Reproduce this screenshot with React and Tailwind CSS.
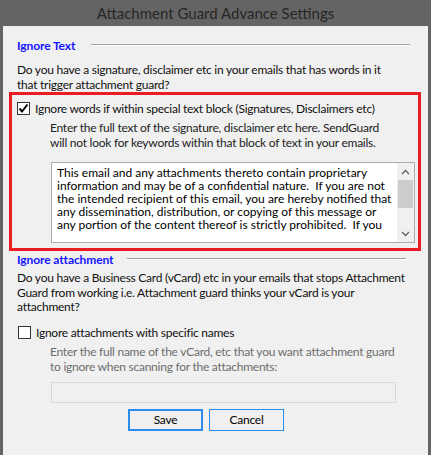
import React from 'react';

const Check = () => (
  <svg width="11" height="11" viewBox="0 0 11 11">
    <path d="M1.5 5.5 L4 8.5 L9.5 1.5" fill="none" stroke="#000" strokeWidth="2" />
  </svg>
);

const Checkbox = ({ checked }) => (
  <div className="flex h-[13px] w-[13px] shrink-0 items-center justify-center border border-[#333] bg-white">
    {checked && <Check />}
  </div>
);

const SectionHeader = ({ title, lineClass }) => (
  <div className="flex h-[16px] items-center pl-[14px]">
    <span className="text-[12px] font-bold tracking-[-0.1px] text-[#1414ff]">{title}</span>
    <div className={lineClass}>
      <div className="h-px bg-[#a0a0a0]" />
      <div className="h-px bg-white" />
    </div>
  </div>
);

const Chevron = ({ up }) => (
  <svg width="9" height="6" viewBox="0 0 9 6">
    <path
      d={up ? 'M1 5 L4.5 1.5 L8 5' : 'M1 1 L4.5 4.5 L8 1'}
      fill="none"
      stroke="#606060"
      strokeWidth="1.3"
    />
  </svg>
);

const App = () => {
  return (
    <div
      className="flex h-[455px] w-[431px] flex-col overflow-hidden whitespace-nowrap bg-[#646464]"
      style={{ fontFamily: 'Lato, "Noto Sans", sans-serif' }}
    >
      {/* title bar */}
      <div className="flex h-[26px] items-center justify-center text-[15px] text-[#262626]">
        Attachment Guard Advance Settings
      </div>

      <div className="mx-[3px] flex-1 bg-[#f0f0f0] pt-[11px] text-[12px] leading-[15px] tracking-[-0.25px] text-[#111]">
        <SectionHeader title="Ignore Text" lineClass="ml-[16px] mr-[18px] flex-1" />

        <p className="ml-[14px] mt-[9px]">
          Do you have a signature, disclaimer etc in your emails that has words in it
          <br />
          that trigger attachment guard?
        </p>

        {/* highlighted block */}
        <div className="ml-[6px] mr-[7px] border-[3px] border-[#ec1c24] pb-[5px] pr-[3px]">
          <div className="flex items-center gap-[5px] pl-[5px] pt-[6px]">
            <Checkbox checked />
            <span>Ignore words if within special text block (Signatures, Disclaimers etc)</span>
          </div>
          <p className="ml-[38px] mt-[4px] text-[#222]">
            Enter the full text of the signature, disclaimer etc here. SendGuard
            <br />
            will not look for keywords within that block of text in your emails.
          </p>
          <div className="ml-[39px] mt-[12px] flex h-[81px] border border-[#abadb3] bg-white">
            <div className="flex-1 overflow-hidden pl-[5px] pt-[3px] text-[12px] leading-[13px] tracking-[0px] text-black">
              This email and any attachments thereto contain proprietary
              <br />
              information and may be of a confidential nature.&nbsp; If you are not
              <br />
              the intended recipient of this email, you are hereby notified that
              <br />
              any dissemination, distribution, or copying of this message or
              <br />
              any portion of the content thereof is strictly prohibited.&nbsp; If you
            </div>
            <div className="flex w-[17px] shrink-0 flex-col items-center bg-[#f0f0f0]">
              <div className="flex h-[17px] items-center justify-center">
                <Chevron up />
              </div>
              <div className="h-[28px] w-[15px] bg-[#cdcdcd]" />
              <div className="flex-1" />
              <div className="flex h-[17px] items-center justify-center">
                <Chevron />
              </div>
            </div>
          </div>
        </div>

        <SectionHeader title="Ignore attachment" lineClass="ml-[14px] mr-[22px] flex-1" />

        <p className="ml-[14px] mt-[4px] leading-[14.5px]">
          Do you have a Business Card (vCard) etc in your emails that stops Attachment
          <br />
          Guard from working i.e. Attachment guard thinks your vCard is your
          <br />
          attachment?
        </p>

        <div className="ml-[15px] mt-[10px] flex items-center gap-[5px]">
          <Checkbox />
          <span>Ignore attachments with specific names</span>
        </div>

        <p className="ml-[47px] mt-[4px] text-[#6d6d6d]">
          Enter the full name of the vCard, etc that you want attachment guard
          <br />
          to ignore when scanning for the attachments:
        </p>

        <div className="ml-[48px] mt-[8px] h-[21px] w-[345px] border border-[#d9d9d9] bg-[#f0f0f0]" />

        <div className="ml-[125px] mt-[6px] flex gap-[6px]">
          <button
            type="button"
            className="h-[22px] w-[75px] border-2 border-[#2a8ceb] bg-[#f0f0f0] text-[12px] text-black"
          >
            Save
          </button>
          <button
            type="button"
            className="h-[22px] w-[75px] border border-[#2a8ceb] bg-[#f0f0f0] text-[12px] text-black"
          >
            Cancel
          </button>
        </div>
      </div>
    </div>
  );
};

export default App;
